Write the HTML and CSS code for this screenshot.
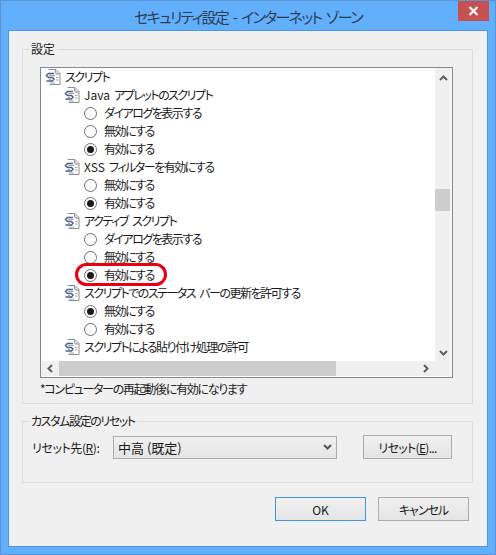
FILE: index.html
```html
<!DOCTYPE html>
<html lang="ja">
<head>
  <meta charset="UTF-8" />
  <title>セキュリティ設定 - インターネット ゾーン</title>
  <link rel="stylesheet" href="styles.css">
</head>
<body>
  <svg class="defs" width="0" height="0">
    <symbol id="script-icon" viewBox="0 0 16 16">
      <path d="M3.500 .5h7.500l4 4v11H4.500" fill="#fff" stroke="#8e8e8e"/>
      <path d="M10.500 .5v4.500h4.500" fill="#dcdcdc" stroke="#8e8e8e"/>
      <path d="M1 3.500h9.500v9.500H1z" fill="#fff"/>
      <path d="M9 4.500H3.500L1.500 6.500l2 2h4l1.500 1.500L7.500 12H1.500" stroke="#44618c" stroke-width="1.500" fill="none"/>
      <path d="M4 6.500h6M4 10.500h2M11 8.500h2.500M11 11h2.500M5 14h5" stroke="#a3a3a3" fill="none"/>
    </symbol>
  </svg>

  <div class="window">
    <div class="titlebar">
      <span class="title">セキュリティ設定 - インターネット ゾーン</span>
      <div class="close">
        <svg width="11" height="10" viewBox="0 0 11 10"><path d="M1.500 1l8 8M9.500 1l-8 8" stroke="#fff" stroke-width="2.200"/></svg>
      </div>
    </div>

    <div class="client">
      <fieldset class="group settings">
        <legend>設定</legend>
        <div class="settings-body">
          <div class="listbox">
            <div class="list-main">
              <div class="rows">
                <div class="row lvl0"><svg class="icon"><use href="#script-icon"/></svg>スクリプト</div>
                <div class="row lvl1"><svg class="icon"><use href="#script-icon"/></svg><span class="latin">Java</span>&nbsp;アプレットのスクリプト</div>
                <div class="row lvl2"><span class="radio"></span>ダイアログを表示する</div>
                <div class="row lvl2"><span class="radio"></span>無効にする</div>
                <div class="row lvl2"><span class="radio on"></span>有効にする</div>
                <div class="row lvl1"><svg class="icon"><use href="#script-icon"/></svg><span class="latin">XSS</span>&nbsp;フィルターを有効にする</div>
                <div class="row lvl2"><span class="radio"></span>無効にする</div>
                <div class="row lvl2"><span class="radio on"></span>有効にする</div>
                <div class="row lvl1"><svg class="icon"><use href="#script-icon"/></svg>アクティブ&nbsp;スクリプト</div>
                <div class="row lvl2"><span class="radio"></span>ダイアログを表示する</div>
                <div class="row lvl2"><span class="radio"></span>無効にする</div>
                <div class="row lvl2"><span class="radio on"></span>有効にする<span class="oval"></span></div>
                <div class="row lvl1"><svg class="icon"><use href="#script-icon"/></svg>スクリプトでのステータス&nbsp;バーの更新を許可する</div>
                <div class="row lvl2"><span class="radio on"></span>無効にする</div>
                <div class="row lvl2"><span class="radio"></span>有効にする</div>
                <div class="row lvl1"><svg class="icon"><use href="#script-icon"/></svg>スクリプトによる貼り付け処理の許可</div>
              </div>
              <div class="vscroll">
                <svg class="arrow" width="9" height="6" viewBox="0 0 9 6"><path d="M1 5l3.500-3.500L8 5" fill="none" stroke="#606060" stroke-width="2"/></svg>
                <div class="vtrack"><div class="vthumb"></div></div>
                <svg class="arrow" width="9" height="6" viewBox="0 0 9 6"><path d="M1 1l3.500 3.500L8 1" fill="none" stroke="#606060" stroke-width="2"/></svg>
              </div>
            </div>
            <div class="hscroll">
              <div class="harrow"><svg width="6" height="9" viewBox="0 0 6 9"><path d="M5 1L1.500 4.500 5 8" fill="none" stroke="#606060" stroke-width="2"/></svg></div>
              <div class="hthumb"></div>
              <div class="harrow"><svg width="6" height="9" viewBox="0 0 6 9"><path d="M1 1l3.500 3.500L1 8" fill="none" stroke="#606060" stroke-width="2"/></svg></div>
            </div>
          </div>
          <p class="note">*コンピューターの再起動後に有効になります</p>
        </div>
      </fieldset>

      <fieldset class="group reset">
        <legend>カスタム設定のリセット</legend>
        <div class="reset-row">
          <label class="reset-label">リセット先(<u>R</u>):</label>
          <div class="select">
            <span>中高 (既定)</span>
            <svg width="9" height="6" viewBox="0 0 9 6"><path d="M1 1l3.500 3.500L8 1" fill="none" stroke="#555" stroke-width="2"/></svg>
          </div>
          <button class="btn btn-reset">リセット(<u>E</u>)...</button>
        </div>
      </fieldset>

      <div class="actions">
        <button class="btn default">OK</button>
        <button class="btn cancel">キャンセル</button>
      </div>
    </div>
  </div>
</body>
</html>
```

FILE: styles.css
```css
html, body {
  margin: 0;
  height: 100%;
}

body {
  font-family: "Noto Sans CJK JP", "Liberation Sans", sans-serif;
  font-size: 12px;
  font-feature-settings: "palt";
  color: #1a1a1a;
  background: #fff;
}

.defs {
  display: block;
}

.window {
  box-sizing: border-box;
  width: 496px;
  height: 555px;
  background: #62b0fd;
  border: 1px solid #5b94d0;
  display: flex;
  flex-direction: column;
}

.titlebar {
  height: 29px;
  flex: none;
  position: relative;
  display: flex;
  justify-content: center;
  align-items: center;
}

.title {
  font-size: 15px;
  color: #2d3e50;
  padding-top: 1px;
  letter-spacing: -1.7px;
  word-spacing: 3px;
}

.close {
  position: absolute;
  top: 0;
  right: 6px;
  width: 31px;
  height: 20px;
  background: #c75050;
  display: flex;
  align-items: center;
  justify-content: center;
}

.client {
  flex: 1;
  margin: 0 7px 7px;
  background: #f0f0f0;
  border: 1px solid #4f94dc;
  padding: 9px 14px 0 13px;
  display: flex;
  flex-direction: column;
}

.group {
  margin: 0;
  padding: 0;
  border: 1px solid #dcdcdc;
  min-width: 0;
  box-sizing: border-box;
}

.group legend {
  margin-left: 6px;
  padding: 0 2px;
  line-height: 18px;
  height: 18px;
}

.reset legend {
  letter-spacing: -1.4px;
}

.settings {
  height: 364px;
  flex: none;
}

.settings-body {
  padding: 9px 19px 0 17px;
}

.listbox {
  box-sizing: border-box;
  height: 311px;
  border: 1px solid #828790;
  padding-right: 1px;
  padding-bottom: 1px;
  background: #fff;
  display: flex;
  flex-direction: column;
}

.list-main {
  flex: 1;
  min-height: 0;
  display: flex;
}

.rows {
  flex: 1;
  min-width: 0;
  overflow: hidden;
}

.row {
  height: 18px;
  line-height: 18px;
  display: flex;
  align-items: center;
  white-space: nowrap;
  position: relative;
  letter-spacing: -1.5px;
  word-spacing: 3px;
}

.latin {
  letter-spacing: 0;
}

.lvl0 { padding-left: 4px; }
.lvl1 { padding-left: 23px; }
.lvl2 { padding-left: 43px; }

.icon {
  width: 16px;
  height: 16px;
  margin-right: 4px;
  flex: none;
}

.radio {
  box-sizing: border-box;
  width: 13px;
  height: 13px;
  margin-right: 7px;
  border: 1px solid #6e6e6e;
  border-radius: 50%;
  background: #fff;
  flex: none;
  display: flex;
  align-items: center;
  justify-content: center;
}

.radio.on::after {
  content: "";
  width: 7px;
  height: 7px;
  border-radius: 50%;
  background: #1a1a1a;
}

.oval {
  position: absolute;
  left: 34px;
  top: -3px;
  width: 92px;
  height: 23px;
  box-sizing: border-box;
  border: 3px solid #e60012;
  border-radius: 12px;
}

.vscroll {
  width: 16px;
  flex: none;
  background: #f0f0f0;
  display: flex;
  flex-direction: column;
  align-items: center;
}

.vscroll .arrow {
  flex: none;
  margin: 7px 0 5px;
}

.vtrack {
  flex: 1;
  width: 100%;
  padding-top: 103px;
  box-sizing: border-box;
}

.vthumb {
  width: 15px;
  height: 22px;
  background: #cdcdcd;
}

.hscroll {
  height: 15px;
  flex: none;
  background: #f0f0f0;
  display: flex;
  align-items: center;
}

.harrow {
  width: 18px;
  height: 100%;
  flex: none;
  display: flex;
  align-items: center;
  justify-content: center;
}

.hthumb {
  width: 277px;
  height: 100%;
  margin-right: 81px;
  background: #cdcdcd;
}

.note {
  margin: 2px 0 0;
  line-height: 18px;
  letter-spacing: -1.3px;
}

.reset {
  margin-top: 8px;
  height: 71px;
  flex: none;
}

.reset-row {
  display: flex;
  align-items: center;
  height: 24px;
  padding: 5px 0 0 9px;
}

.reset-label {
  width: 81px;
  flex: none;
  letter-spacing: -0.4px;
}

.select {
  box-sizing: border-box;
  width: 224px;
  height: 23px;
  background: linear-gradient(#f0f0f0, #e5e5e5);
  border: 1px solid #acacac;
  font-size: 13px;
  padding: 0 4px;
  display: flex;
  align-items: center;
  justify-content: space-between;
}

.btn {
  box-sizing: border-box;
  width: 91px;
  height: 24px;
  padding: 0;
  font-family: inherit;
  font-size: 12px;
  font-feature-settings: inherit;
  color: #1a1a1a;
  background: linear-gradient(#f0f0f0, #e5e5e5);
  border: 1px solid #acacac;
}

.btn.default {
  border-color: #3c97ea;
}

.btn.cancel {
  letter-spacing: -1px;
}

.btn-reset {
  width: 89px;
  margin-left: 26px;
  letter-spacing: -0.7px;
}

.actions {
  margin-top: 14px;
  display: flex;
  justify-content: flex-end;
  gap: 12px;
  padding-right: 4px;
}
```
